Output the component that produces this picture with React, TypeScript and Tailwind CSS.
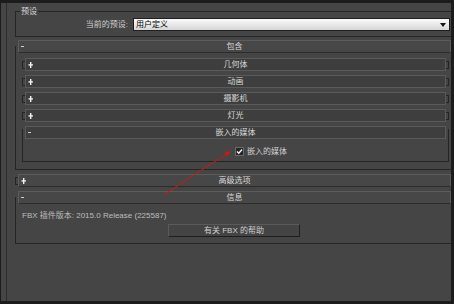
import React from "react";

function PlusIcon() {
  return (
    <svg width="5" height="6" viewBox="0 0 5 6" className="block">
      <rect x="2" y="0" width="1.4" height="6" fill="#f0f0f0" />
      <rect x="0.5" y="2.2" width="4.4" height="1.4" fill="#f0f0f0" />
    </svg>
  );
}

function MinusIcon() {
  return <div className="w-[3px] h-px bg-[#d0d0d0]" />;
}

function SubBar({ title, expanded }: { title: string; expanded?: boolean }) {
  return (
    <div className="flex-1 h-[13px] bg-[#3e3e3e] border border-[#5a5a5a] flex items-center">
      <div className="w-[10px] flex justify-start pl-[2px]">{expanded ? <MinusIcon /> : <PlusIcon />}</div>
      <div className="flex-1 text-center text-[#d8d8d8] leading-[11px]">{title}</div>
      <div className="w-[10px]" />
    </div>
  );
}

function SubRollout({ title }: { title: string }) {
  return (
    <div className="flex items-center ml-[6px] mr-[2px] h-[13px]">
      <div className="w-[3px] h-[8px] border-l border-t border-b border-[#252525]" />
      <SubBar title={title} />
      <div className="w-[3px] h-[8px] border-r border-t border-b border-[#252525]" />
    </div>
  );
}

function HeaderBar({ title, expanded }: { title: string; expanded?: boolean }) {
  return (
    <div className="h-[13px] bg-[#474747] border border-[#5c5c5c] border-b-[#2c2c2c] flex items-center">
      <div className="w-[10px] flex justify-start pl-[2px]">{expanded ? <MinusIcon /> : <PlusIcon />}</div>
      <div className="flex-1 text-center text-[#d8d8d8] leading-[11px]">{title}</div>
      <div className="w-[10px]" />
    </div>
  );
}

export default function App() {
  return (
    <div className="relative w-[454px] h-[304px] bg-[#1c1c1c] pt-[3px] pl-px pr-[3px] pb-[3px] text-[8px] font-['Liberation_Sans','Noto_Sans_CJK_SC',sans-serif] overflow-hidden">
      <div className="h-full bg-[#454545] flex">
        <div className="w-[5px] shrink-0" />
        <div className="flex-1 border-l border-[#2d2d2d] flex flex-col">
          {/* 预设 group */}
          <fieldset className="mt-[3px] ml-[8px] border-t border-l border-b border-[#262626] h-[31px]">
            <legend className="ml-[4px] px-px text-[#d8d8d8] leading-[11px]">预设</legend>
            <div className="flex items-center mt-px">
              <div className="w-[112px] text-right text-[#d0d0d0] leading-[11px]">当前的预设:</div>
              <div className="ml-[5px] mr-px flex-1 h-[13px] border border-[#1e1e1e] bg-gradient-to-b from-[#fbfbfb] to-[#d6d6d6] flex items-center">
                <span className="pl-[2px] text-black leading-[11px] flex-1">用户定义</span>
                <svg width="6" height="4" viewBox="0 0 6 4" className="mr-[3px]">
                  <path d="M0 0 H6 L3 4 Z" fill="#111" />
                </svg>
              </div>
            </div>
          </fieldset>

          {/* 包含 rollout */}
          <div className="mt-[9px] ml-[8px] border-l border-b border-[#252525] pb-[7px]">
            <div className="-mt-[6px] ml-[2px]">
              <HeaderBar title="包含" expanded />
            </div>
            <div className="mt-[5px] flex flex-col gap-[4px]">
              <SubRollout title="几何体" />
              <SubRollout title="动画" />
              <SubRollout title="摄影机" />
              <SubRollout title="灯光" />
              <div className="mt-[3px] ml-[6px] mr-[2px] border-l border-r border-b border-[#252525]">
                <div className="-mt-[3px] mx-[2px] flex">
                  <SubBar title="嵌入的媒体" expanded />
                </div>
                <div className="h-[22px] pt-[8px] pl-[212px] flex items-start gap-[3px]">
                  <div className="w-[9px] h-[9px] bg-[#262626] border border-[#6a6a6a] flex items-center justify-center">
                    <svg width="7" height="7" viewBox="0 0 7 7">
                      <path d="M1 3.5 L2.8 5.3 L6 1.5" stroke="#f2f2f2" strokeWidth="1.4" fill="none" />
                    </svg>
                  </div>
                  <span className="text-[#d0d0d0] leading-[10px]">嵌入的媒体</span>
                </div>
              </div>
            </div>
          </div>

          {/* 高级选项 */}
          <div className="mt-[4px] ml-[8px] flex items-center">
            <div className="w-[3px] h-[8px] border-l border-t border-b border-[#252525]" />
            <div className="flex-1">
              <HeaderBar title="高级选项" />
            </div>
          </div>

          {/* 信息 */}
          <div className="mt-[10px] ml-[8px] border-l border-b border-[#252525] pb-[6px]">
            <div className="-mt-[6px] ml-[2px]">
              <HeaderBar title="信息" expanded />
            </div>
            <div className="mt-[6px] pl-[6px] text-[#bdbdbd] leading-[11px]">FBX 插件版本: 2015.0 Release (225587)</div>
            <div className="mt-[3px] ml-[152px] w-[132px] h-[13px] bg-[#444444] border border-[#5a5a5a] border-r-[#1e1e1e] border-b-[#1e1e1e] flex items-center justify-center text-[#cfcfcf] leading-[11px]">
              有关 FBX 的帮助
            </div>
          </div>
        </div>
      </div>

      <svg className="absolute left-0 top-0 pointer-events-none" width="454" height="304" viewBox="0 0 454 304">
        <line x1="165" y1="194" x2="227" y2="153.5" stroke="#d41414" strokeWidth="1" />
        <path d="M231 151 L224.6 152.2 L227.4 156.4 Z" fill="#d41414" />
      </svg>
    </div>
  );
}
